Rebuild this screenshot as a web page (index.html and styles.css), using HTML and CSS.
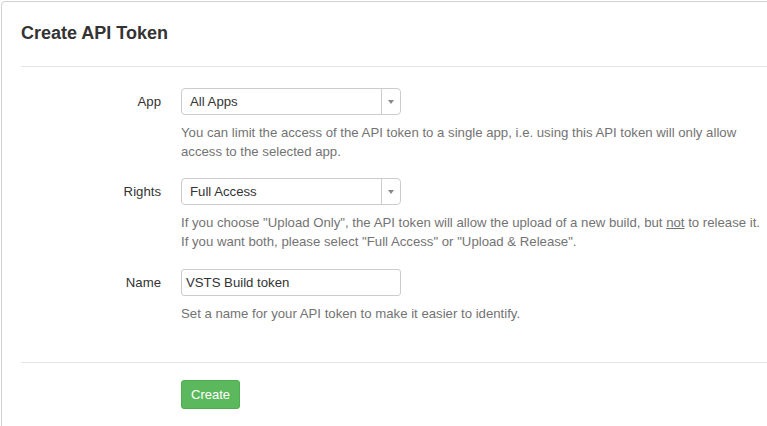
FILE: index.html
```html
<!DOCTYPE html>
<html>
<head>
<meta charset="utf-8">
<link rel="stylesheet" href="styles.css">
</head>
<body>
<div class="page">
  <div class="panel">
    <h2 class="title">Create API Token</h2>
    <div class="rule"></div>
    <form class="form">
      <div class="row">
        <label class="label">App</label>
        <div class="field">
          <div class="select"><span class="select-text">All Apps</span><span class="select-arrow"><i class="tri"></i></span></div>
          <p class="help">You can limit the access of the API token to a single app, i.e. using this API token will only allow access to the selected app.</p>
        </div>
      </div>
      <div class="row row-wide">
        <label class="label">Rights</label>
        <div class="field">
          <div class="select"><span class="select-text">Full Access</span><span class="select-arrow"><i class="tri"></i></span></div>
          <p class="help">If you choose "Upload Only", the API token will allow the upload of a new build, but <u>not</u> to release it.<br>If you want both, please select "Full Access" or "Upload &amp; Release".</p>
        </div>
      </div>
      <div class="row row-last">
        <label class="label">Name</label>
        <div class="field">
          <div class="input">VSTS Build token</div>
          <p class="help">Set a name for your API token to make it easier to identify.</p>
        </div>
      </div>
    </form>
    <div class="rule"></div>
    <div class="actions">
      <span class="btn">Create</span>
    </div>
  </div>
</div>
</body>
</html>
```

FILE: styles.css
```css
html, body {
  margin: 0;
  padding: 0;
  background: #fff;
  overflow: hidden;
}
body {
  font-family: "Liberation Sans", Arial, sans-serif;
  font-size: 13.2px;
  color: #333;
}
.page {
  padding: 1px 0 0 1px;
}
.panel {
  width: 820px;
  min-height: 520px;
  border: 1px solid #d0d0d0;
  border-radius: 4px;
  padding: 19px 20px 0 19px;
  box-sizing: border-box;
}
.title {
  margin: 0 0 21px 0;
  font-size: 18px;
  line-height: 24px;
  font-weight: bold;
  color: #333;
}
.rule {
  border-top: 1px solid #e5e5e5;
  height: 0;
}
.form {
  padding-top: 21px;
  margin: 0;
}
.row {
  display: flex;
  align-items: flex-start;
  margin-bottom: 17px;
}
.row-wide {
  margin-bottom: 18px;
}
.row-last {
  margin-bottom: 39px;
}
.label {
  width: 140px;
  margin-right: 20px;
  text-align: right;
  line-height: 27px;
  color: #333;
}
.field {
  display: flex;
  flex-direction: column;
}
.select, .input {
  width: 220px;
  height: 27px;
  box-sizing: border-box;
  border: 1px solid #ccc;
  border-radius: 4px;
  display: flex;
  align-items: center;
  background: #fff;
}
.select-text {
  flex: 1;
  padding-left: 8px;
  line-height: 25px;
  color: #333;
}
.select-arrow {
  width: 18px;
  height: 25px;
  border-left: 1px solid #ccc;
  display: flex;
  align-items: center;
  justify-content: center;
}
.tri {
  width: 0;
  height: 0;
  border-left: 3px solid transparent;
  border-right: 3px solid transparent;
  border-top: 4px solid #888;
}
.input {
  border-radius: 3px;
  padding-left: 4px;
  line-height: 25px;
}
.help {
  margin: 8px 0 0 0;
  width: 590px;
  line-height: 19px;
  color: #737373;
}
.actions {
  padding: 17px 0 0 160px;
}
.btn {
  display: inline-block;
  background: #5cb85c;
  border: 1px solid #4cae4c;
  border-radius: 3px;
  color: #fff;
  font-size: 13px;
  line-height: 19px;
  padding: 4px 9px;
}
```
